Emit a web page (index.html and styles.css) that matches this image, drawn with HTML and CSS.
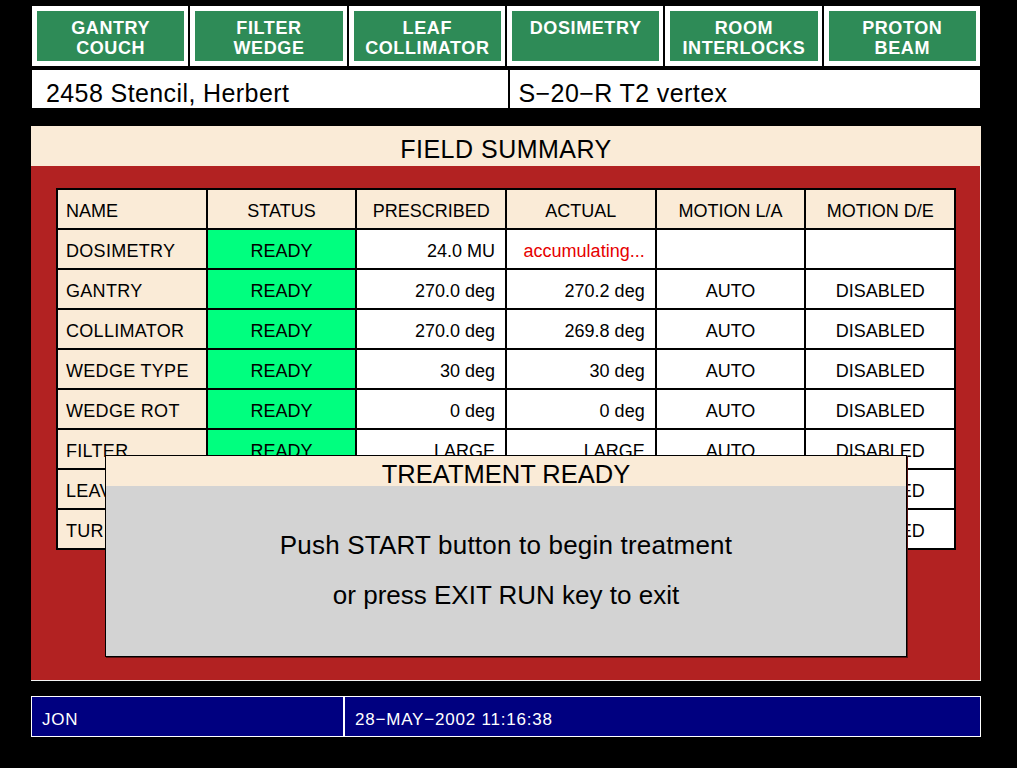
FILE: index.html
```html
<!DOCTYPE html>
<html lang="en">
<head>
<meta charset="utf-8">
<title>Field Summary</title>
<link rel="stylesheet" href="styles.css">
</head>
<body>
<div class="screen">
  <nav class="tabs">
    <div class="tab"><div class="tab-face">GANTRY<br>COUCH</div></div>
    <div class="tab"><div class="tab-face">FILTER<br>WEDGE</div></div>
    <div class="tab"><div class="tab-face">LEAF<br>COLLIMATOR</div></div>
    <div class="tab"><div class="tab-face">DOSIMETRY</div></div>
    <div class="tab"><div class="tab-face">ROOM<br>INTERLOCKS</div></div>
    <div class="tab"><div class="tab-face">PROTON<br>BEAM</div></div>
  </nav>

  <div class="idbar">
    <div class="idcell">2458 Stencil, Herbert</div>
    <div class="idcell">S&minus;20&minus;R T2 vertex</div>
  </div>

  <section class="panel">
    <h1 class="panel-title">FIELD SUMMARY</h1>
    <div class="panel-body">
      <div class="grid">
        <div class="c hdr left">NAME</div>
        <div class="c hdr">STATUS</div>
        <div class="c hdr">PRESCRIBED</div>
        <div class="c hdr">ACTUAL</div>
        <div class="c hdr">MOTION L/A</div>
        <div class="c hdr">MOTION D/E</div>

        <div class="c name">DOSIMETRY</div>
        <div class="c ok">READY</div>
        <div class="c num">24.0 MU</div>
        <div class="c num busy">accumulating...</div>
        <div class="c mid"></div>
        <div class="c mid"></div>

        <div class="c name">GANTRY</div>
        <div class="c ok">READY</div>
        <div class="c num">270.0 deg</div>
        <div class="c num">270.2 deg</div>
        <div class="c mid">AUTO</div>
        <div class="c mid">DISABLED</div>

        <div class="c name">COLLIMATOR</div>
        <div class="c ok">READY</div>
        <div class="c num">270.0 deg</div>
        <div class="c num">269.8 deg</div>
        <div class="c mid">AUTO</div>
        <div class="c mid">DISABLED</div>

        <div class="c name">WEDGE TYPE</div>
        <div class="c ok">READY</div>
        <div class="c num">30 deg</div>
        <div class="c num">30 deg</div>
        <div class="c mid">AUTO</div>
        <div class="c mid">DISABLED</div>

        <div class="c name">WEDGE ROT</div>
        <div class="c ok">READY</div>
        <div class="c num">0 deg</div>
        <div class="c num">0 deg</div>
        <div class="c mid">AUTO</div>
        <div class="c mid">DISABLED</div>

        <div class="c name">FILTER</div>
        <div class="c ok">READY</div>
        <div class="c num">LARGE</div>
        <div class="c num">LARGE</div>
        <div class="c mid">AUTO</div>
        <div class="c mid">DISABLED</div>

        <div class="c name">LEAVES</div>
        <div class="c ok">READY</div>
        <div class="c num">CLOSED</div>
        <div class="c num">CLOSED</div>
        <div class="c mid">AUTO</div>
        <div class="c mid">DISABLED</div>

        <div class="c name">TURNTABLE</div>
        <div class="c ok">READY</div>
        <div class="c num">0.0 deg</div>
        <div class="c num">0.0 deg</div>
        <div class="c mid">AUTO</div>
        <div class="c mid">DISABLED</div>
      </div>
    </div>

    <div class="dialog">
      <div class="dialog-title">TREATMENT READY</div>
      <div class="dialog-body">
        <p class="line-wide">Push START button to begin treatment</p>
        <p>or press EXIT RUN key to exit</p>
      </div>
    </div>
  </section>

  <footer class="statusbar">
    <div class="status-cell user">JON</div>
    <div class="status-cell">28&minus;MAY&minus;2002 11:16:38</div>
  </footer>
</div>
</body>
</html>
```

FILE: styles.css
```css
* { box-sizing: border-box; }

html, body {
  margin: 0;
  padding: 0;
  background: #000;
}

body {
  font-family: "Liberation Sans", Arial, Helvetica, sans-serif;
  color: #000;
  width: 1017px;
  height: 768px;
  overflow: hidden;
}

.screen {
  padding-top: 6px;
}

/* ---------- top tabs ---------- */
.tabs {
  display: flex;
  gap: 2px;
  margin-left: 32px;
  width: 948px;
  height: 60px;
}

.tab {
  flex: 1;
  background: #fff;
  padding: 5px 4px 5px 5px;
}

.tab-face {
  height: 100%;
  background: #2e8b57;
  color: #fff;
  font-weight: bold;
  font-size: 18px;
  letter-spacing: 0.6px;
  line-height: 20px;
  text-align: center;
  padding-top: 7px;
}

/* ---------- patient / field id ---------- */
.idbar {
  display: flex;
  gap: 2px;
  margin: 4px 0 0 32px;
  width: 948px;
  height: 38px;
}

.idcell {
  flex: 1;
  background: #fff;
  font-size: 25px;
  letter-spacing: 0.4px;
  line-height: 30px;
  padding: 8px 0 0 14px;
  white-space: nowrap;
}

.idcell + .idcell {
  padding-left: 9px;
}

/* ---------- field summary panel ---------- */
.panel {
  position: relative;
  margin: 18px 0 0 31px;
  width: 950px;
}

.panel-title {
  margin: 0;
  height: 40px;
  background: #faebd7;
  font-weight: normal;
  font-size: 25px;
  letter-spacing: 0.5px;
  line-height: 33px;
  padding-top: 7px;
  text-align: center;
}

.panel-body {
  height: 515px;
  background: #b22222;
  border-right: 1px solid #f4f4f4;
  border-bottom: 1px solid #f4f4f4;
  padding: 22px 0 0 25px;
}

.grid {
  display: grid;
  grid-template-columns: repeat(6, 1fr);
  grid-auto-rows: 38px;
  gap: 2px;
  padding: 2px;
  width: 900px;
  background: #000;
}

.c {
  background: #fff;
  font-size: 18px;
  line-height: 33px;
  padding: 5px 10px 0;
  white-space: nowrap;
  overflow: hidden;
}

.hdr {
  background: #faebd7;
  text-align: center;
}

.hdr.left {
  text-align: left;
  padding-left: 8px;
}

.name {
  background: #faebd7;
  padding-left: 8px;
  letter-spacing: 0.3px;
}

.ok {
  background: #00ff7f;
  text-align: center;
}

.num { text-align: right; }

.mid { text-align: center; }

.busy { color: #e60000; }

/* ---------- overlay dialog ---------- */
.dialog {
  position: absolute;
  left: 74px;
  top: 329px;
  width: 802px;
  height: 202px;
  border: 1px solid #000;
  background: #d3d3d3;
  box-shadow: 1px 1px 0 #5a1010;
}

.dialog-title {
  height: 30px;
  background: #faebd7;
  font-size: 25.5px;
  line-height: 24px;
  padding-top: 6px;
  text-align: center;
}

.dialog-body {
  padding-top: 34px;
  text-align: center;
  font-size: 26px;
  line-height: 50px;
}

.dialog-body p {
  margin: 0;
}

.dialog-body .line-wide {
  letter-spacing: 0.2px;
}

/* ---------- status bar ---------- */
.statusbar {
  display: flex;
  margin: 15px 0 0 31px;
  width: 950px;
  height: 41px;
  border: 1px solid #fff;
  background: #000080;
  color: #fff;
}

.status-cell {
  flex: 1;
  font-size: 17px;
  letter-spacing: 0.8px;
  line-height: 33px;
  padding: 6px 0 0 10px;
  white-space: nowrap;
}

.status-cell.user {
  flex: 0 0 313px;
  border-right: 2px solid #fff;
}
```
